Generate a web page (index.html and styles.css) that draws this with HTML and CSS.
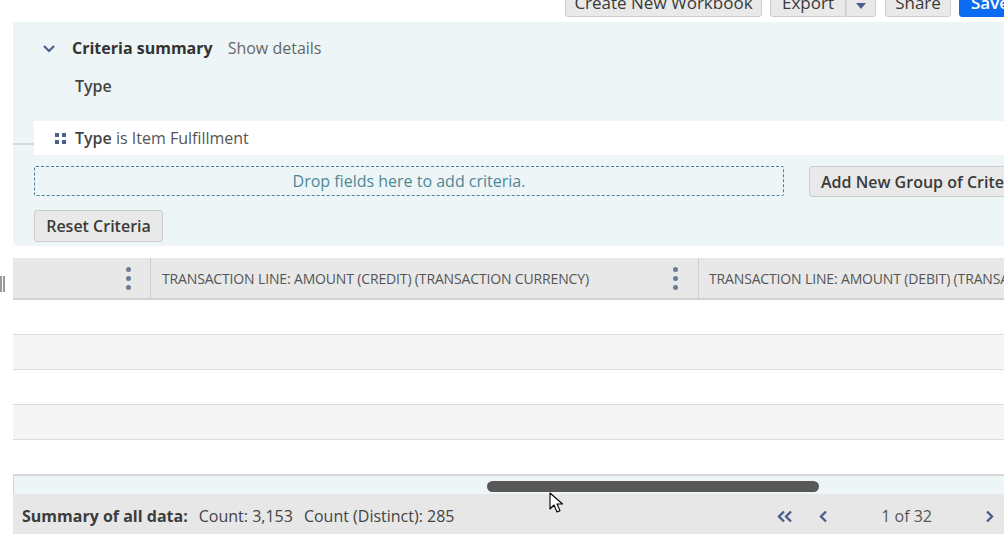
FILE: index.html
```html
<!DOCTYPE html>
<html lang="en">
<head>
    <meta charset="UTF-8">
    <title>Dataset Criteria</title>
    <link rel="stylesheet" href="styles.css">
</head>
<body>
<div class="page">

    <div class="toolbar">
        <button class="btn btn-workbook">Create New Workbook</button>
        <div class="split">
            <button class="btn split-main">Export</button>
            <button class="btn split-arrow">
                <svg width="10" height="6" viewBox="0 0 10 6"><path d="M0 0h10L5 6z" fill="#4a5f8c"/></svg>
            </button>
        </div>
        <button class="btn btn-share">Share</button>
        <button class="btn btn-primary">Save</button>
    </div>

    <section class="criteria">
        <div class="summary">
            <svg class="chevron" width="14" height="9" viewBox="0 0 14 9"><path d="M2 2l5 5 5-5" fill="none" stroke="#4a5f8c" stroke-width="2.2"/></svg>
            <span class="summary-title">Criteria summary</span>
            <a class="show-details">Show details</a>
        </div>
        <div class="summary-type">Type</div>

        <div class="crit-row">
            <div class="crit-card">
                <span class="grip"><i></i><i></i><i></i><i></i></span>
                <b>Type</b>&nbsp;is Item Fulfillment
            </div>
        </div>

        <div class="drop-line">
            <div class="dropzone">Drop fields here to add criteria.</div>
            <button class="btn btn-add">Add New Group of Criteria</button>
        </div>
        <button class="btn btn-reset">Reset Criteria</button>
    </section>

    <div class="table-area">
        <div class="side">
            <span class="handle"></span>
        </div>
        <div class="grid">
            <div class="grid-head">
                <div class="col col-1"><span class="kebab"><i></i><i></i><i></i></span></div>
                <div class="col col-2">
                    <span class="col-title">TRANSACTION LINE: AMOUNT (CREDIT) (TRANSACTION CURRENCY)</span>
                    <span class="kebab"><i></i><i></i><i></i></span>
                </div>
                <div class="col col-3">
                    <span class="col-title">TRANSACTION LINE: AMOUNT (DEBIT) (TRANSACTION CURRENCY)</span>
                </div>
            </div>
            <div class="grid-row"></div>
            <div class="grid-row alt"></div>
            <div class="grid-row"></div>
            <div class="grid-row alt"></div>
            <div class="grid-row"></div>
            <div class="hscroll"><span class="thumb"></span></div>
            <div class="grid-foot">
                <b>Summary of all data:</b>
                <span class="stat">Count: 3,153</span>
                <span class="stat">Count (Distinct): 285</span>
                <div class="pager">
                    <svg class="pg-first" width="17" height="13" viewBox="0 0 17 13"><path d="M8 1.5L3 6.5l5 5M15 1.5l-5 5 5 5" fill="none" stroke="#4a5f8c" stroke-width="2.4"/></svg>
                    <svg class="pg-prev" width="9" height="13" viewBox="0 0 9 13"><path d="M7 1.5L2 6.5l5 5" fill="none" stroke="#4a5f8c" stroke-width="2.4"/></svg>
                    <span class="pg-text">1 of 32</span>
                    <svg class="pg-next" width="9" height="13" viewBox="0 0 9 13"><path d="M2 1.5l5 5-5 5" fill="none" stroke="#4a5f8c" stroke-width="2.4"/></svg>
                </div>
            </div>
        </div>
    </div>

    <svg class="cursor" width="14" height="22" viewBox="0 0 14 22">
        <path d="M1 1v16l4-4 3 7 3-1.3-3-6.7h5.5z" fill="#fff" stroke="#000" stroke-width="1.1" stroke-linejoin="round"/>
    </svg>
</div>
</body>
</html>
```

FILE: styles.css
```css
body {
    margin: 0;
    overflow: hidden;
    font-family: 'Open Sans', 'Liberation Sans', sans-serif;
    color: #333;
    background-color: #fff;
}

.page {
    position: relative;
    width: 1040px;
    height: 534px;
}

/* top toolbar, scrolled partly out of view */
.toolbar {
    display: flex;
    height: 22px;
    padding-left: 565px;
    gap: 8px;
}

.btn {
    font-family: inherit;
    font-size: 16px;
    font-weight: 600;
    color: #3a3a3a;
    background-color: #e9e9e9;
    border: 1px solid #cdcdcd;
    border-radius: 3px;
    padding: 0 10px;
    white-space: nowrap;
    cursor: pointer;
}

.toolbar .btn {
    height: 31px;
    margin-top: -14px;
    padding-top: 2px;
    font-size: 17px;
    font-weight: 500;
}

.toolbar .btn-workbook {
    width: 197px;
    padding: 2px 0 0;
}

.split {
    display: flex;
    margin-right: 1px;
}

.toolbar .split-main {
    width: 76px;
    padding: 2px 0 0;
    border-radius: 3px 0 0 3px;
}

.toolbar .split-arrow {
    width: 30px;
    border-left: 1px solid #d8d8d8;
    border-radius: 0 3px 3px 0;
    padding: 0;
}

.split-arrow svg {
    display: block;
    margin: 9px auto 0;
}

.toolbar .btn-share {
    width: 66px;
    padding: 2px 0 0;
}

.toolbar .btn-primary {
    background-color: #0b6cf2;
    border-color: #0b6cf2;
    color: #fff;
    font-weight: 600;
    width: 62px;
}

/* criteria panel */
.criteria {
    margin-left: 13px;
    background-color: #eef5f6;
    border-bottom-left-radius: 5px;
    padding: 15px 0 4px 21px;
}

.summary {
    display: flex;
    align-items: center;
    height: 22px;
}

.chevron {
    margin-left: 8px;
    margin-right: 16px;
}

.summary-title {
    font-size: 16px;
    font-weight: 700;
    color: #333;
}

.show-details {
    margin-left: 15px;
    font-size: 16px;
    color: #666;
}

.summary-type {
    margin-top: 16px;
    padding-left: 41px;
    font-size: 16px;
    font-weight: 600;
    line-height: 22px;
    color: #444;
}

.crit-row {
    margin: 24px 0 0 -21px;
    padding-left: 21px;
    background: linear-gradient(#d3dadd, #d3dadd) no-repeat 0 22px / 21px 2px;
}

.crit-card {
    display: flex;
    align-items: center;
    height: 34px;
    padding-left: 21px;
    background-color: #fff;
    font-size: 16px;
    color: #555;
}

.crit-card b {
    font-weight: 600;
    color: #444;
}

.grip {
    display: grid;
    grid-template-columns: 4px 4px;
    gap: 3px;
    margin-right: 9px;
}

.grip i {
    width: 4px;
    height: 4px;
    background-color: #4a5f8c;
}

.drop-line {
    display: flex;
    align-items: flex-start;
    margin-top: 11px;
}

.dropzone {
    box-sizing: border-box;
    flex-shrink: 0;
    width: 750px;
    height: 30px;
    border: 1px dashed #4a8494;
    border-radius: 2px;
    text-align: center;
    font-size: 16px;
    line-height: 28px;
    color: #4d8898;
}

.btn-add {
    margin-left: 25px;
    height: 31px;
    padding: 0 11px;
}

.btn-reset {
    display: block;
    margin-top: 13px;
    width: 129px;
    height: 32px;
    padding: 0;
}

/* results grid */
.table-area {
    display: flex;
    margin-top: 12px;
}

.side {
    flex-shrink: 0;
    width: 13px;
    height: 42px;
    display: flex;
    align-items: center;
}

.handle {
    width: 5px;
    height: 16px;
    margin-top: 10px;
    border-left: 2px solid #9a9a9a;
    border-right: 2px solid #9a9a9a;
    box-sizing: border-box;
}

.grid {
    flex: 1;
    min-width: 0;
}

.grid-head {
    display: flex;
    height: 40px;
    background-color: #e8e8e8;
    border-bottom: 2px solid #d2d2d2;
}

.col {
    display: flex;
    align-items: center;
    box-sizing: border-box;
    flex-shrink: 0;
}

.col-1 {
    width: 138px;
    justify-content: flex-end;
    padding-right: 19px;
    border-right: 1px solid #cfcfcf;
}

.col-2 {
    width: 548px;
    justify-content: space-between;
    padding: 0 20px 0 11px;
    border-right: 1px solid #cfcfcf;
}

.col-3 {
    flex: 1 1 0;
    min-width: 0;
    padding-left: 10px;
    overflow: hidden;
}

.col-title {
    font-size: 14px;
    color: #555;
    white-space: nowrap;
    letter-spacing: -0.15px;
}

.kebab {
    display: flex;
    flex-direction: column;
    gap: 4px;
}

.kebab i {
    width: 5px;
    height: 5px;
    border-radius: 50%;
    background-color: #6b7c96;
}

.grid-row {
    height: 34px;
    border-bottom: 1px solid #dcdcdc;
}

.grid-row.alt {
    background-color: #f5f5f5;
}

.hscroll {
    height: 18px;
    background-color: #eef5f6;
    border-left: 1px solid #d6d6d6;
    border-top: 1px solid #d6d6d6;
    display: flex;
}

.thumb {
    width: 332px;
    height: 11px;
    margin: 5px 0 0 473px;
    border-radius: 6px;
    background-color: #585858;
}

.grid-foot {
    display: flex;
    align-items: center;
    height: 36px;
    padding: 4px 0 0 9px;
    background-color: #e7e7e7;
    font-size: 16px;
    color: #444;
}

.grid-foot b {
    font-weight: 700;
    color: #3c3c3c;
}

.stat {
    margin-left: 11px;
}

.pager {
    display: flex;
    align-items: center;
    margin-left: auto;
    padding-right: 46px;
}

.pg-prev {
    margin-left: 26px;
}

.pg-text {
    margin-left: 53px;
    margin-right: 53px;
    color: #555;
}

.cursor {
    position: absolute;
    left: 549px;
    top: 492px;
}
```
